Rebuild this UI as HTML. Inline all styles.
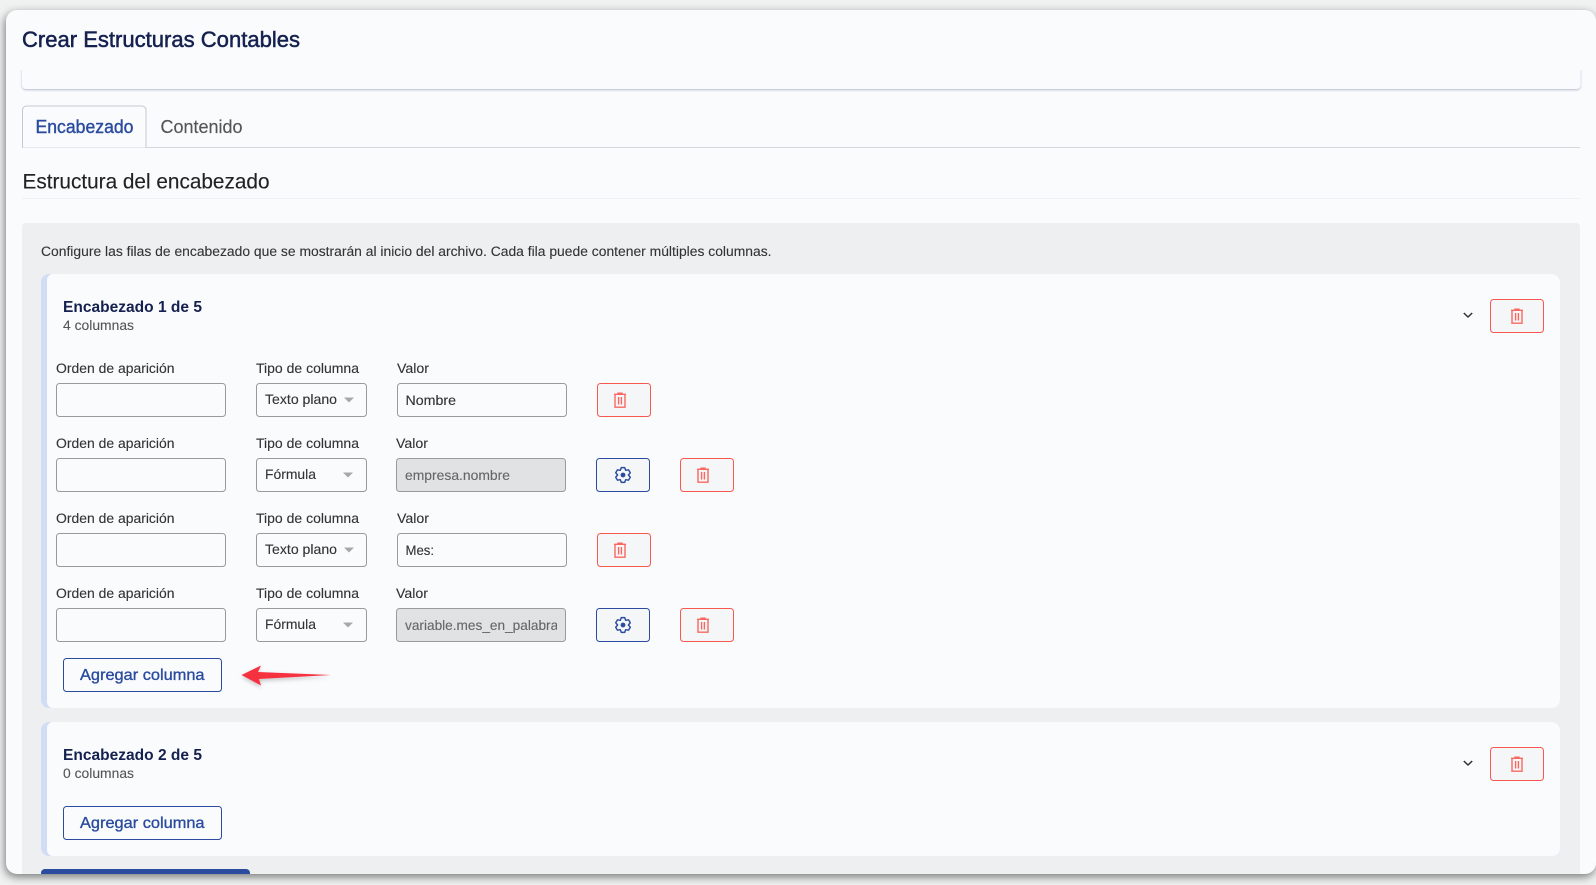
<!DOCTYPE html>
<html lang="es">
<head>
<meta charset="utf-8">
<title>Crear Estructuras Contables</title>
<style>
html,body{margin:0;padding:0;width:1596px;height:885px;overflow:hidden;background:#f0f2f2;}
#win{position:absolute;left:6px;top:10px;width:1590px;height:864px;border-radius:11px;background:#fafbfd;box-shadow:-1px 3px 9px rgba(0,0,0,.5);}
svg{position:absolute;left:0;top:0;font-family:"Liberation Sans",sans-serif;}
.lb{font-size:13.5px;fill:#333;stroke:#333;stroke-width:.12px;}
.in{fill:#fafbfd;stroke:#9a9a9c;stroke-width:1;}
.dis{fill:#e1e2e4;stroke:#9a9a9c;stroke-width:1;}
.val{font-size:14px;fill:#333;stroke:#333;stroke-width:.12px;}
.dv{font-size:14px;fill:#666;stroke:#666;stroke-width:.12px;}
.del{fill:#f5f6f8;stroke:#f9584f;stroke-width:1;}
.cfg{fill:#f5f6f8;stroke:#2a4b9e;stroke-width:1;}
.add{fill:#fafbfd;stroke:#2a4b9e;stroke-width:1;}
.addt{font-size:16px;fill:#2a4b9e;stroke:#2a4b9e;stroke-width:.35px;}
.car{fill:#a8a8a8;}
.h4{font-size:15.5px;font-weight:bold;fill:#14204f;}
.sub{font-size:13.5px;fill:#555;stroke:#555;stroke-width:.1px;}
.tr{fill:none;stroke:#f9584f;stroke-width:1.4;opacity:.9;}
.gr{fill:none;stroke:#2a4b9e;stroke-width:1.45;stroke-linejoin:round;}
.ch{fill:none;stroke:#333;stroke-width:1.5;}
</style>
</head>
<body>
<div id="win"></div>
<svg width="1596" height="885" viewBox="0 0 1596 885" xmlns="http://www.w3.org/2000/svg">
<defs>
<symbol id="trash" overflow="visible"><g class="tr"><path d="M-6-5.7H6M-2-5.7V-6.8H2V-5.7M-5-5.7V7.2H5V-5.7M-1.4-3V4.5M1.4-3V4.5"/></g></symbol>
<symbol id="gear" overflow="visible"><path class="gr" d="M-1.7-7.4L1.7-7.4L2.7-4.68L5.56-5.18L7.27-2.22L5.4 0L7.27 2.22L5.56 5.18L2.7 4.68L1.7 7.4L-1.7 7.4L-2.7 4.68L-5.56 5.18L-7.27 2.22L-5.4 0L-7.27-2.22L-5.56-5.18L-2.7-4.68Z"/><circle r="2.4" fill="#2a4b9e"/></symbol>
<filter id="as" x="-20%" y="-80%" width="140%" height="300%"><feDropShadow dx="0" dy="2" stdDeviation="2" flood-color="#000" flood-opacity=".22"/></filter>
<filter id="cs" x="-2%" y="-20%" width="104%" height="140%"><feDropShadow dx="0" dy="1" stdDeviation="1" flood-color="#5a6a96" flood-opacity=".45"/></filter>
<clipPath id="vc"><rect x="405" y="600" width="152" height="50"/></clipPath>
<clipPath id="tc"><rect x="0" y="70" width="1596" height="30"/></clipPath>
<clipPath id="wc"><rect x="6" y="10" width="1590" height="864" rx="11"/></clipPath>
</defs>

<text x="22" y="47" font-size="22" fill="#14204f" stroke="#14204f" stroke-width=".5" textLength="278" lengthAdjust="spacingAndGlyphs">Crear Estructuras Contables</text>

<g clip-path="url(#tc)">
<rect x="22" y="50" width="1558.5" height="39" rx="4" fill="#fafbfd" filter="url(#cs)"/>
</g>

<path d="M22 147.5H1580" stroke="#d5d7db" fill="none"/>
<path d="M22.5 147.5V110a4 4 0 0 1 4-4H142a4 4 0 0 1 4 4V147.5" fill="#fafbfd" stroke="#c5c8ce"/>
<text x="35.5" y="133" font-size="18.5" fill="#2a4b9e" stroke="#2a4b9e" stroke-width=".4" textLength="98" lengthAdjust="spacingAndGlyphs">Encabezado</text>
<text x="160.5" y="133" font-size="18.5" fill="#555" stroke="#555" stroke-width=".15" textLength="82" lengthAdjust="spacingAndGlyphs">Contenido</text>
<text x="22.5" y="188.5" font-size="21" fill="#222" stroke="#222" stroke-width=".12" textLength="247" lengthAdjust="spacingAndGlyphs">Estructura del encabezado</text>
<path d="M22 198.5H1580" stroke="#f0f1f4" fill="none"/>

<g clip-path="url(#wc)">
<rect x="22" y="223" width="1558" height="680" rx="4" fill="#eeeff1"/>
<rect x="41" y="869" width="209" height="30" rx="4" fill="#2a4b9e"/>
</g>
<text x="41" y="256" font-size="13.5" fill="#333" stroke="#333" stroke-width=".1" textLength="730.5" lengthAdjust="spacingAndGlyphs">Configure las filas de encabezado que se mostrarán al inicio del archivo. Cada fila puede contener múltiples columnas.</text>

<!-- Card 1 -->
<rect x="41" y="274" width="1519" height="434" rx="8" fill="#d1ddf5"/>
<path d="M47 274H1552a8 8 0 0 1 8 8V700a8 8 0 0 1-8 8H53a6 6 0 0 1-6-6V280a6 6 0 0 1 6-6Z" fill="#fafbfd"/>
<text x="63" y="312" class="h4" textLength="139" lengthAdjust="spacingAndGlyphs">Encabezado 1 de 5</text>
<text x="63" y="330" class="sub" textLength="71" lengthAdjust="spacingAndGlyphs">4 columnas</text>
<path class="ch" d="M1463.8 313L1468 317L1472.2 313"/>
<rect class="del" x="1490.5" y="299.5" width="53" height="33" rx="3"/>
<use href="#trash" x="1517" y="316"/>

<!-- Row 1 -->
<text x="56" y="373" class="lb" textLength="118.5" lengthAdjust="spacingAndGlyphs">Orden de aparición</text>
<text x="256" y="373" class="lb" textLength="103" lengthAdjust="spacingAndGlyphs">Tipo de columna</text>
<text x="397" y="373" class="lb" textLength="32" lengthAdjust="spacingAndGlyphs">Valor</text>
<rect class="in" x="56.5" y="383.5" width="169" height="33" rx="3"/>
<rect class="in" x="256.5" y="383.5" width="110" height="33" rx="3"/>
<text x="265" y="404" class="val" textLength="72" lengthAdjust="spacingAndGlyphs">Texto plano</text>
<path class="car" d="M344 397.5H354L349 402.5Z"/>
<rect class="in" x="397.5" y="383.5" width="169" height="33" rx="3"/>
<text x="405.5" y="405" class="val" textLength="50.5" lengthAdjust="spacingAndGlyphs">Nombre</text>
<rect class="del" x="597.5" y="383.5" width="53" height="33" rx="3"/>
<use href="#trash" x="620" y="400"/>

<!-- Row 2 -->
<text x="56" y="448" class="lb" textLength="118.5" lengthAdjust="spacingAndGlyphs">Orden de aparición</text>
<text x="256" y="448" class="lb" textLength="103" lengthAdjust="spacingAndGlyphs">Tipo de columna</text>
<text x="396" y="448" class="lb" textLength="32" lengthAdjust="spacingAndGlyphs">Valor</text>
<rect class="in" x="56.5" y="458.5" width="169" height="33" rx="3"/>
<rect class="in" x="256.5" y="458.5" width="110" height="33" rx="3"/>
<text x="265" y="479" class="val" textLength="51" lengthAdjust="spacingAndGlyphs">Fórmula</text>
<path class="car" d="M343 472.5H353L348 477.5Z"/>
<rect class="dis" x="396.5" y="458.5" width="169" height="33" rx="3"/>
<text x="405" y="480" class="dv" textLength="105" lengthAdjust="spacingAndGlyphs">empresa.nombre</text>
<rect class="cfg" x="596.5" y="458.5" width="53" height="33" rx="3"/>
<use href="#gear" x="623" y="475"/>
<rect class="del" x="680.5" y="458.5" width="53" height="33" rx="3"/>
<use href="#trash" x="703" y="475"/>

<!-- Row 3 -->
<text x="56" y="523" class="lb" textLength="118.5" lengthAdjust="spacingAndGlyphs">Orden de aparición</text>
<text x="256" y="523" class="lb" textLength="103" lengthAdjust="spacingAndGlyphs">Tipo de columna</text>
<text x="397" y="523" class="lb" textLength="32" lengthAdjust="spacingAndGlyphs">Valor</text>
<rect class="in" x="56.5" y="533.5" width="169" height="33" rx="3"/>
<rect class="in" x="256.5" y="533.5" width="110" height="33" rx="3"/>
<text x="265" y="554" class="val" textLength="72" lengthAdjust="spacingAndGlyphs">Texto plano</text>
<path class="car" d="M344 547.5H354L349 552.5Z"/>
<rect class="in" x="397.5" y="533.5" width="169" height="33" rx="3"/>
<text x="405.5" y="555" class="val" textLength="28.5" lengthAdjust="spacingAndGlyphs">Mes:</text>
<rect class="del" x="597.5" y="533.5" width="53" height="33" rx="3"/>
<use href="#trash" x="620" y="550"/>

<!-- Row 4 -->
<text x="56" y="598" class="lb" textLength="118.5" lengthAdjust="spacingAndGlyphs">Orden de aparición</text>
<text x="256" y="598" class="lb" textLength="103" lengthAdjust="spacingAndGlyphs">Tipo de columna</text>
<text x="396" y="598" class="lb" textLength="32" lengthAdjust="spacingAndGlyphs">Valor</text>
<rect class="in" x="56.5" y="608.5" width="169" height="33" rx="3"/>
<rect class="in" x="256.5" y="608.5" width="110" height="33" rx="3"/>
<text x="265" y="629" class="val" textLength="51" lengthAdjust="spacingAndGlyphs">Fórmula</text>
<path class="car" d="M343 622.5H353L348 627.5Z"/>
<rect class="dis" x="396.5" y="608.5" width="169" height="33" rx="3"/>
<g clip-path="url(#vc)"><text x="405" y="630" class="dv" textLength="160" lengthAdjust="spacingAndGlyphs">variable.mes_en_palabras</text></g>
<rect class="cfg" x="596.5" y="608.5" width="53" height="33" rx="3"/>
<use href="#gear" x="623" y="625"/>
<rect class="del" x="680.5" y="608.5" width="53" height="33" rx="3"/>
<use href="#trash" x="703" y="625"/>

<rect class="add" x="63.5" y="658.5" width="158" height="33" rx="3"/>
<text x="80" y="680" class="addt" textLength="124.5" lengthAdjust="spacingAndGlyphs">Agregar columna</text>
<path d="M241.5 675L261 665.5L258 672L331 675L259 679L261 685.5Z" fill="#f6323f" filter="url(#as)"/>

<!-- Card 2 -->
<rect x="41" y="722" width="1519" height="134" rx="8" fill="#d1ddf5"/>
<path d="M47 722H1552a8 8 0 0 1 8 8V848a8 8 0 0 1-8 8H53a6 6 0 0 1-6-6V728a6 6 0 0 1 6-6Z" fill="#fafbfd"/>
<text x="63" y="760" class="h4" textLength="139" lengthAdjust="spacingAndGlyphs">Encabezado 2 de 5</text>
<text x="63" y="778" class="sub" textLength="71" lengthAdjust="spacingAndGlyphs">0 columnas</text>
<path class="ch" d="M1463.8 761L1468 765L1472.2 761"/>
<rect class="del" x="1490.5" y="747.5" width="53" height="33" rx="3"/>
<use href="#trash" x="1517" y="764"/>
<rect class="add" x="63.5" y="806.5" width="158" height="33" rx="3"/>
<text x="80" y="828" class="addt" textLength="124.5" lengthAdjust="spacingAndGlyphs">Agregar columna</text>
</svg>
</body>
</html>
